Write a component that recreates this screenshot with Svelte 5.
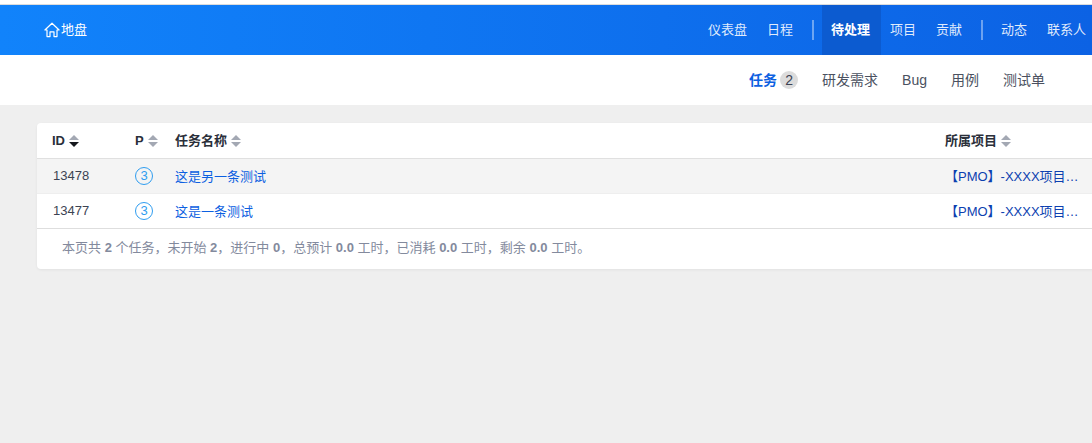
<script>
  const mainLeft = ['仪表盘', '日程'];
  const mainMid = ['项目', '贡献'];
  const mainRight = ['动态', '联系人'];
  const tabs = ['研发需求', 'Bug', '用例', '测试单'];
  const rows = [
    { id: 13478, name: '这是另一条测试', alt: true },
    { id: 13477, name: '这是一条测试', alt: false }
  ];
</script>

{#snippet sorter(active)}
  <svg class="sort" width="10" height="12" viewBox="0 0 10 12" aria-hidden="true">
    <path d="M5 0 L10 5 H0 Z" fill="#a3a8b3" />
    <path d="M0 7 H10 L5 12 Z" fill={active ? '#16181d' : '#a3a8b3'} />
  </svg>
{/snippet}

<div class="page">
  <header class="topbar">
    <a class="brand">
      <svg width="16" height="16" viewBox="0 0 16 16" fill="none" stroke="#fff" stroke-width="1.2" stroke-linejoin="round" aria-hidden="true">
        <path d="M0.9 8 L8 1.2 L15.1 8 L13 8 V14.6 H10 V9.8 H6 V14.6 H3 V8 Z" />
      </svg>
      <span>地盘</span>
    </a>
    <nav class="mainnav">
      {#each mainLeft as item}<a>{item}</a>{/each}
      <i class="divider first"></i>
      <a class="active">待处理</a>
      {#each mainMid as item}<a>{item}</a>{/each}
      <i class="divider"></i>
      {#each mainRight as item}<a>{item}</a>{/each}
    </nav>
  </header>

  <div class="subbar">
    <a class="tab current">任务<span class="count">2</span></a>
    {#each tabs as t}<a class="tab">{t}</a>{/each}
  </div>

  <main class="content">
    <section class="card">
      <div class="row head">
        <div class="c-id">ID{@render sorter(true)}</div>
        <div class="c-p">P{@render sorter(false)}</div>
        <div class="c-name">任务名称{@render sorter(false)}</div>
        <div class="c-proj">所属项目{@render sorter(false)}</div>
      </div>
      {#each rows as r}
        <div class="row body" class:alt={r.alt}>
          <div class="c-id num">{r.id}</div>
          <div class="c-p"><span class="pri">3</span></div>
          <div class="c-name"><a>{r.name}</a></div>
          <div class="c-proj"><a class="proj">【PMO】-XXXX项目…</a></div>
        </div>
      {/each}
      <div class="summary">本页共 <b>2</b> 个任务，未开始 <b>2</b>，进行中 <b>0</b>，总预计 <b>0.0</b> 工时，已消耗 <b>0.0</b> 工时，剩余 <b>0.0</b> 工时。</div>
    </section>
  </main>
</div>

<style>
  :global(body) {
    margin: 0;
    background: #fff;
    overflow: hidden;
  }
  .page {
    height: 443px;
    display: flex;
    flex-direction: column;
    padding-top: 4px;
    box-sizing: border-box;
    font-family: "Liberation Sans", "Noto Sans CJK SC", sans-serif;
    font-size: 13px;
    color: #3c4353;
  }
  .topbar {
    height: 50px;
    flex: none;
    border-top: 1px solid #dcdcdc;
    display: flex;
    justify-content: space-between;
    align-items: stretch;
    padding: 0 0 0 44px;
    background: linear-gradient(90deg, #1183fb 0%, #0c62e4 100%);
    color: #fff;
  }
  .brand {
    display: flex;
    align-items: center;
    gap: 2px;
  }
  .brand span {
    margin-left: -1px;
    padding-bottom: 3px;
  }
  .mainnav {
    display: flex;
    align-items: stretch;
    margin-right: -4px;
  }
  .mainnav a {
    display: flex;
    align-items: center;
    padding: 0 10px 3px;
    color: rgba(255, 255, 255, 0.88);
    white-space: nowrap;
  }
  .mainnav a.active {
    background: #0c5bd0;
    color: #fff;
    font-weight: 700;
    padding: 0 11px 3px 9px;
    margin-right: -1px;
  }
  .divider {
    width: 2px;
    height: 20px;
    align-self: center;
    margin: 0 8px 0 9px;
    background: rgba(255, 255, 255, 0.4);
  }
  .subbar {
    height: 50px;
    flex: none;
    display: flex;
    justify-content: flex-end;
    align-items: center;
    gap: 24px;
    padding-right: 47px;
    background: #fff;
    font-size: 14px;
  }
  .tab {
    display: flex;
    align-items: center;
    color: #4a5160;
    white-space: nowrap;
    line-height: 20px;
  }
  .tab.current {
    color: #0c60e1;
    font-weight: 700;
  }
  .count {
    width: 18px;
    height: 18px;
    margin-left: 3px;
    border-radius: 9px;
    background: #dcdcdc;
    color: #3c4353;
    font-weight: 400;
    font-size: 14px;
    line-height: 18px;
    text-align: center;
  }
  .content {
    flex: 1;
    background: #efefef;
    padding: 18px 0 0 37px;
    overflow: hidden;
  }
  .card {
    width: 1060px;
    background: #fff;
    border-radius: 4px;
    box-shadow: 0 1px 3px rgba(0, 0, 0, 0.06);
  }
  .row {
    display: flex;
    align-items: center;
    box-sizing: border-box;
    border-bottom: 1px solid #e0e0e0;
  }
  .row.head {
    height: 36px;
    font-weight: 700;
    color: #2a2f3a;
  }
  .row.body {
    height: 35px;
    border-bottom-color: #eeeeee;
  }
  .row.body:nth-last-child(2) {
    border-bottom-color: #dedede;
  }
  .row.alt {
    background: #f4f4f4;
  }
  .c-id { width: 83px; padding-left: 15px; flex: none; display: flex; align-items: center; }
  .c-p { width: 40px; flex: none; display: flex; align-items: center; }
  .c-name { width: 770px; flex: none; display: flex; align-items: center; }
  .c-proj { flex: 1; display: flex; align-items: center; min-width: 0; }
  .head .c-name, .head .c-proj { line-height: 14px; }
  .num { padding-left: 16px; width: 82px; padding-bottom: 2px; }
  .sort { margin-left: 4px; flex: none; }
  .pri {
    width: 16px;
    height: 16px;
    border: 1px solid #2f9df0;
    border-radius: 50%;
    color: #2f9df0;
    font-size: 13px;
    line-height: 16px;
    text-align: center;
  }
  .body .c-name a, .proj {
    padding-bottom: 2px;
  }
  .c-name a { color: #0c60e1; }
  .proj {
    color: #0c3fb0;
    white-space: nowrap;
  }
  .summary {
    height: 40px;
    line-height: 38px;
    padding-left: 25px;
    color: #838a9d;
    white-space: pre-wrap;
  }
  .summary b {
    font-weight: 700;
  }
  a { text-decoration: none; }
</style>
